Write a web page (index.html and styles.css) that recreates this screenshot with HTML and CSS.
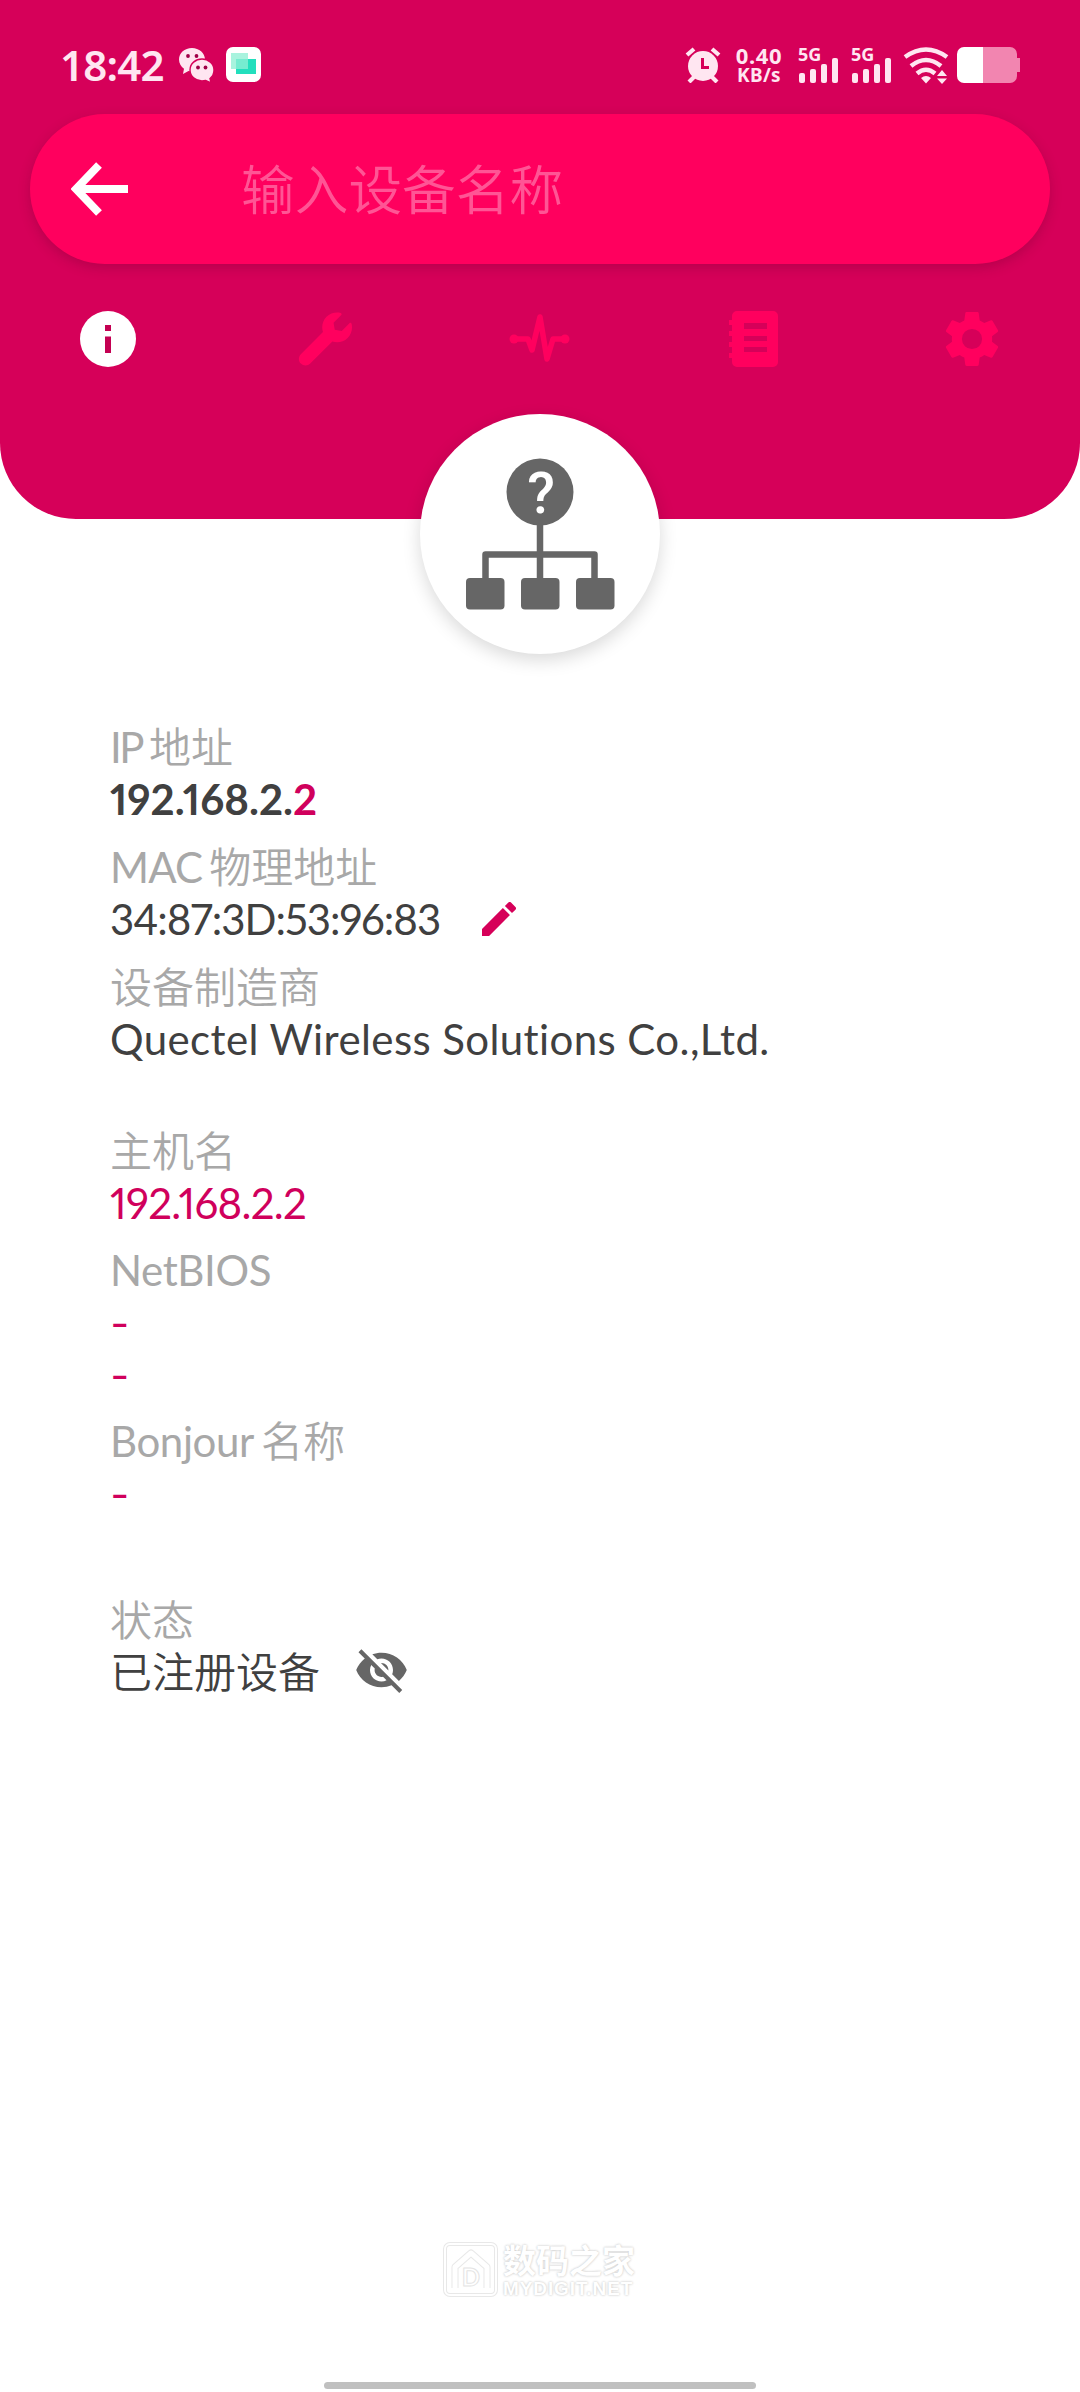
FILE: index.html
```html
<!DOCTYPE html>
<html lang="zh-CN">
<head>
<meta charset="utf-8">
<title>设备详情</title>
<link rel="stylesheet" href="styles.css">
</head>
<body>
<div class="screen">
  <header class="header">
    <div class="status-bar">
      <div class="status-left">
        <span class="clock">18:42</span>
        <svg class="wechat" viewBox="0 0 37 36"><path d="M14 1C6.500 1 1 6 1 12.500c0 4 2 7 5 9.200L5 27l5.500-3c1 .3 2.500.4 3.500.4C21 24.400 27 19 27 12.500S21 1 14 1z" fill="#ffe6f1"/><path d="M24 12c-6.500 0-12 4.700-12 11s5.500 11 12 11c1.300 0 2.500-.2 3.700-.5L33 36l-1-4.500c2.600-2 4-5 4-8.500 0-6.300-5.500-11-12-11z" fill="#ffe6f1" stroke="#d60059" stroke-width="1.400"/><g fill="#a00048"><circle cx="10" cy="9" r="1.900"/><circle cx="18.500" cy="9" r="1.900"/><circle cx="20" cy="20.500" r="1.900"/><circle cx="27.500" cy="20.500" r="1.900"/></g></svg>
        <svg class="app-badge" viewBox="0 0 35 35"><rect width="35" height="35" rx="7" fill="#fff"/><path d="M10 12h20v15H10z" fill="#22dfbd"/><path d="M5 6h17v16H5z" fill="#a8f3de"/><path d="M10 12h12v10H10z" fill="#76ecd0"/></svg>
      </div>
      <div class="status-right">
        <svg class="alarm" viewBox="0 0 36 36"><g fill="none" stroke="#ffe6f1" stroke-width="4.200"><path d="M2 8l7-6M34 8l-7-6M4 35l5-5M32 35l-5-5"/></g><circle cx="18" cy="19" r="15" fill="#ffe6f1"/><path d="M17.500 11v9.500H24" fill="none" stroke="#d60059" stroke-width="3"/></svg>
        <div class="speed"><span>0.40</span><span class="unit">KB/s</span></div>
        <div class="signal"><span>5G</span><svg viewBox="0 0 42 26"><g fill="#ffe6f1"><rect x="1" y="16" width="6" height="10" rx="2"/><rect x="12" y="12" width="6" height="14" rx="2"/><rect x="23" y="7" width="6" height="19" rx="2"/><rect x="34" y="1" width="6" height="25" rx="2"/></g></svg></div>
        <div class="signal"><span>5G</span><svg viewBox="0 0 42 26"><g fill="#ffe6f1"><rect x="1" y="16" width="6" height="10" rx="2"/><rect x="12" y="12" width="6" height="14" rx="2"/><rect x="23" y="7" width="6" height="19" rx="2"/><rect x="34" y="1" width="6" height="25" rx="2"/></g></svg></div>
        <svg class="wifi" viewBox="0 0 46 37"><g fill="none" stroke="#ffe6f1" stroke-width="4.500"><path d="M2 10Q23-5 44 10"/><path d="M8 19Q23 7 38 19"/><path d="M14 26.500Q23 19 32 26.500"/></g><path d="M18 31q5-4 10 0l-5 5.500zM34 29l5-6 5 6zM34 31.500h10l-5 5.500z" fill="#ffe6f1"/></svg>
        <svg class="battery" viewBox="0 0 63 36"><path d="M26 0h27a7 7 0 0 1 7 7v4h3v14h-3v4a7 7 0 0 1-7 7H26z" fill="#f285b0"/><path d="M7 0h19v36H7a7 7 0 0 1-7-7V7a7 7 0 0 1 7-7z" fill="#fff"/></svg>
      </div>
    </div>
    <div class="search">
      <svg class="back" viewBox="0 0 58 54"><path d="M28 3L5 27l23 24M5 27h52" fill="none" stroke="#fff" stroke-width="8"/></svg>
      <span class="hint">输入设备名称</span>
    </div>
    <nav class="tabs">
      <svg class="active" viewBox="0 0 56 56"><circle cx="28" cy="28" r="28"/><path class="hole" d="M25 14h6v6h-6zM25 25.500h6V42h-6z"/></svg>
      <svg viewBox="-28 -14 540 540"><path d="M507.730 109.100c-2.240-9.030-13.540-12.090-20.120-5.510l-74.360 74.360-67.880-11.310-11.310-67.880 74.360-74.360c6.620-6.620 3.430-17.900-5.660-20.160-47.380-11.740-99.550.91-136.580 37.930-39.640 39.640-50.550 97.100-34.050 147.200L18.740 402.760c-24.990 24.990-24.990 65.510 0 90.500 24.990 24.990 65.510 24.990 90.500 0l213.210-213.210c50.120 16.710 107.470 5.680 147.370-34.220 37.070-37.070 49.700-89.320 37.910-136.730z"/></svg>
      <svg class="pulse" viewBox="0 0 62 56"><circle cx="5" cy="28" r="4.500"/><circle cx="56" cy="28" r="4.500"/><path d="M5 28h14l4 11 8-33 7 42 6-20h12" fill="none" stroke="#ff005e" stroke-width="5.500" stroke-linejoin="round" stroke-linecap="round"/></svg>
      <svg viewBox="3 0 56 56"><path fill-rule="evenodd" d="M12 0h36a5 5 0 0 1 5 5v46a5 5 0 0 1-5 5H12a5 5 0 0 1-5-5v-4H4v-5h3v-6H4v-5h3v-6H4v-5h3v-6H4V9h3V5a5 5 0 0 1 5-5zM19 12v6h23v-6zM19 25v5h23v-5zM19 36v5h23v-5z"/></svg>
      <svg viewBox="2 2 20 20"><path d="M19.140 12.940c.04-.3.060-.61.060-.94 0-.32-.02-.64-.07-.94l2.030-1.580c.18-.14.230-.41.120-.61l-1.920-3.320c-.12-.22-.37-.29-.59-.22l-2.390.96c-.5-.38-1.030-.7-1.620-.94l-.36-2.540c-.04-.24-.24-.41-.48-.41h-3.840c-.24 0-.43.170-.47.410l-.36 2.540c-.59.240-1.130.570-1.620.940l-2.390-.96c-.22-.08-.47 0-.59.220L2.740 8.870c-.12.210-.08.470.120.610l2.030 1.580c-.05.300-.09.630-.09.940s.02.640.070.940l-2.030 1.580c-.18.140-.23.410-.12.610l1.920 3.320c.12.220.37.290.59.220l2.390-.96c.5.380 1.030.7 1.620.940l.36 2.540c.05.240.24.410.48.410h3.840c.24 0 .44-.17.470-.41l.36-2.540c.59-.24 1.130-.56 1.620-.94l2.390.96c.22.080.47 0 .59-.22l1.920-3.320c.12-.22.070-.47-.12-.61l-2.010-1.580zM12 15.600A3.600 3.600 0 1 1 12 8.400a3.600 3.600 0 0 1 0 7.200z"/></svg>
    </nav>
    <div class="avatar">
      <svg viewBox="0 0 240 240" fill="#666"><circle cx="120" cy="78" r="33.500"/><path d="M65.500 166v-25.500h109V166M120 110v56" fill="none" stroke="#666" stroke-width="6.500" stroke-linejoin="round"/><rect x="46" y="164" width="38.500" height="31.500" rx="4"/><rect x="101" y="164" width="38.500" height="31.500" rx="4"/><rect x="156" y="164" width="38.500" height="31.500" rx="4"/><text class="question" x="121" y="99" text-anchor="middle">?</text></svg>
    </div>
  </header>

  <main class="details">
    <section class="group">
      <div class="field"><div class="label ip-label">IP<span class="han">地址</span></div><div class="value ip">192.168.2.<span class="accent">2</span></div></div>
      <div class="field"><div class="label mac-label">MAC<span class="han">物理地址</span></div><div class="value row"><span class="mac">34:87:3D:53:96:83</span><svg class="edit" viewBox="3 3 18 18"><path d="M3 17.250V21h3.750L17.810 9.940l-3.750-3.750L3 17.250zM20.710 7.040a1 1 0 0 0 0-1.410l-2.340-2.340a1 1 0 0 0-1.410 0l-1.830 1.830 3.750 3.750 1.830-1.830z"/></svg></div></div>
      <div class="field"><div class="label"><span class="cjk">设备制造商</span></div><div class="value vendor">Quectel Wireless Solutions Co.,Ltd.</div></div>
    </section>
    <section class="group names">
      <div class="field"><div class="label"><span class="cjk">主机名</span></div><div class="value host accent">192.168.2.2</div></div>
      <div class="field"><div class="label netbios">NetBIOS</div><div class="value dash accent">-</div><div class="value dash accent">-</div></div>
      <div class="field"><div class="label bonjour">Bonjour<span class="han">名称</span></div><div class="value dash accent">-</div></div>
    </section>
    <section class="group state">
      <div class="field"><div class="label"><span class="cjk">状态</span></div><div class="value row"><span class="cjk">已注册设备</span><svg class="eye" viewBox="1 2 22 20"><path d="M12 7c2.760 0 5 2.240 5 5 0 .65-.13 1.260-.36 1.830l2.920 2.920c1.510-1.260 2.700-2.890 3.430-4.750-1.730-4.390-6-7.500-11-7.500-1.400 0-2.740.25-3.980.7l2.160 2.160C10.740 7.130 11.350 7 12 7zM2 4.270l2.280 2.280.46.460C3.080 8.300 1.780 10.020 1 12c1.730 4.390 6 7.500 11 7.500 1.550 0 3.030-.3 4.380-.84l.42.420L19.730 22 21 20.730 3.270 3 2 4.270zM7.530 9.800l1.550 1.550c-.05.210-.08.430-.08.650 0 1.660 1.340 3 3 3 .22 0 .44-.03.650-.08l1.550 1.550c-.67.330-1.410.530-2.200.530-2.760 0-5-2.240-5-5 0-.79.200-1.530.530-2.200zm4.310-.78l3.150 3.150.02-.16c0-1.660-1.340-3-3-3l-.17.010z"/></svg></div></div>
    </section>
  </main>

  <footer class="footer">
    <div class="watermark">
      <svg viewBox="0 0 55 55" fill="none" stroke-linejoin="round"><g stroke="#e8e8e8" stroke-width="4"><rect x="2" y="2" width="51" height="51" rx="5"/><path d="M12 46V25L28 11l16 14v21" stroke-width="7"/></g><g stroke="#fff" stroke-width="2"><rect x="2" y="2" width="51" height="51" rx="5"/><path d="M12 46V25L28 11l16 14v21" stroke-width="5"/></g><text class="logo-letter" x="28" y="44" text-anchor="middle">D</text></svg>
      <div class="brand"><span class="brand-name">数码之家</span><span class="brand-url">MYDIGIT.NET</span></div>
    </div>
    <div class="home-bar"></div>
  </footer>
</div>
</body>
</html>
```
FILE: styles.css
```css
* { box-sizing: border-box; }
body { margin: 0; background: #fff; font-family: Lato, "Noto Sans CJK SC", sans-serif; }
svg { display: block; flex: none; }
.screen { width: 1080px; height: 2392px; display: flex; flex-direction: column; }

.header { position: relative; height: 519px; flex: none; background: #d60059; border-radius: 0 0 76px 76px; }
.status-bar { height: 114px; padding: 47px 60px 0 60px; display: flex; justify-content: space-between; align-items: flex-start; color: #ffe6f1; font-family: "Noto Sans", sans-serif; }
.status-left, .status-right { display: flex; align-items: flex-start; }
.clock { width: 118px; font-size: 42px; font-weight: 600; line-height: 36px; letter-spacing: -.8px; white-space: nowrap; }
.wechat { width: 37px; height: 36px; }
.app-badge { width: 35px; height: 35px; margin-left: 11px; }
.alarm { width: 36px; height: 36px; }
.speed { width: 50px; margin-left: 13px; display: flex; flex-direction: column; align-items: center; font-size: 22px; font-weight: 700; line-height: 16px; letter-spacing: .6px; }
.speed .unit { font-size: 19px; line-height: 20px; padding-top: 2px; letter-spacing: .3px; }
.signal { width: 42px; margin-left: 14px; font-size: 18px; font-weight: 700; line-height: 15px; display: flex; flex-direction: column; height: 36px; }
.signal svg { width: 42px; height: 26px; margin-top: -5px; }
.signal + .signal { margin-left: 11px; }
.wifi { width: 46px; height: 37px; margin-left: 10px; }
.battery { width: 63px; height: 36px; margin-left: 8px; }

.search { height: 150px; margin: 0 30px; padding-left: 41px; border-radius: 75px; background: #ff005e; box-shadow: 0 4px 12px rgba(90, 0, 40, .25); display: flex; align-items: center; }
.back { width: 58px; height: 54px; }
.hint { margin: -4px 0 0 112px; font-family: "Noto Sans CJK SC", sans-serif; font-size: 53.700px; font-weight: 350; line-height: 80px; color: #ff5595; }
.tabs { margin-top: 47px; display: grid; grid-template-columns: repeat(5, 1fr); justify-items: center; }
.tabs svg { width: 56px; height: 56px; fill: #ff005e; }
.tabs .pulse { width: 62px; }
.tabs .active { fill: #fff; }
.tabs .hole { fill: #c40052; }
.avatar { position: absolute; left: 420px; top: 414px; width: 240px; height: 240px; border-radius: 50%; background: #fff; box-shadow: 0 6px 18px rgba(0, 0, 0, .15); }
.question { font-family: Roboto, sans-serif; font-size: 57px; font-weight: 500; fill: #fff; }

.details { padding: 202px 110px 0; font-size: 42px; line-height: 52px; color: #404040; font-feature-settings: "pnum"; font-variant-ligatures: none; white-space: nowrap; }
.group { display: flex; flex-direction: column; gap: 16px; }
.names { margin-top: 60px; gap: 15px; }
.state { margin-top: 75px; }
.state .row { padding-top: 1px; }
.label { color: #a8a8a8; font-weight: 400; }
.cjk, .han { font-weight: 350; font-family: "Noto Sans CJK SC", sans-serif; line-height: 1; }
.han { margin-left: 7px; letter-spacing: 0; }
.ip-label { letter-spacing: -2.500px; }
.mac-label { letter-spacing: -.8px; }
.netbios { letter-spacing: -.4px; }
.bonjour { letter-spacing: -.4px; }
.row { display: flex; align-items: center; }
.accent { color: #d0005c; }
.ip { font-weight: 700; }
.mac { letter-spacing: -1px; }
.host { letter-spacing: -.7px; }
.vendor { letter-spacing: .4px; }
.dash { width: fit-content; transform: scaleX(1.25); transform-origin: 0 50%; }
.edit { width: 34px; height: 34px; margin-left: 42px; fill: #d60059; }
.eye { width: 51px; height: 46px; margin-left: 36px; fill: #666; }

.footer { margin-top: auto; display: flex; flex-direction: column; align-items: center; }
.watermark { display: flex; gap: 5px; height: 55px; margin: 0 2px 85px 0; }
.watermark svg { width: 55px; height: 55px; }
.logo-letter { font: 700 24px Lato, sans-serif; fill: #fff; stroke: #e4e4e4; stroke-width: 1px; }
.brand { width: 132px; display: flex; flex-direction: column; color: #fff; font-weight: 700; white-space: nowrap; text-shadow: 0 0 2px #ccc, 0 0 3px #ddd; }
.brand-name { font-family: "Noto Sans CJK SC", sans-serif; font-size: 33px; line-height: 35px; }
.brand-url { font-family: "Liberation Sans", sans-serif; font-size: 19px; line-height: 24px; letter-spacing: .9px; }
.home-bar { width: 432px; height: 7px; margin-bottom: 3px; border-radius: 4px; background: #c0c0c0; }
```
